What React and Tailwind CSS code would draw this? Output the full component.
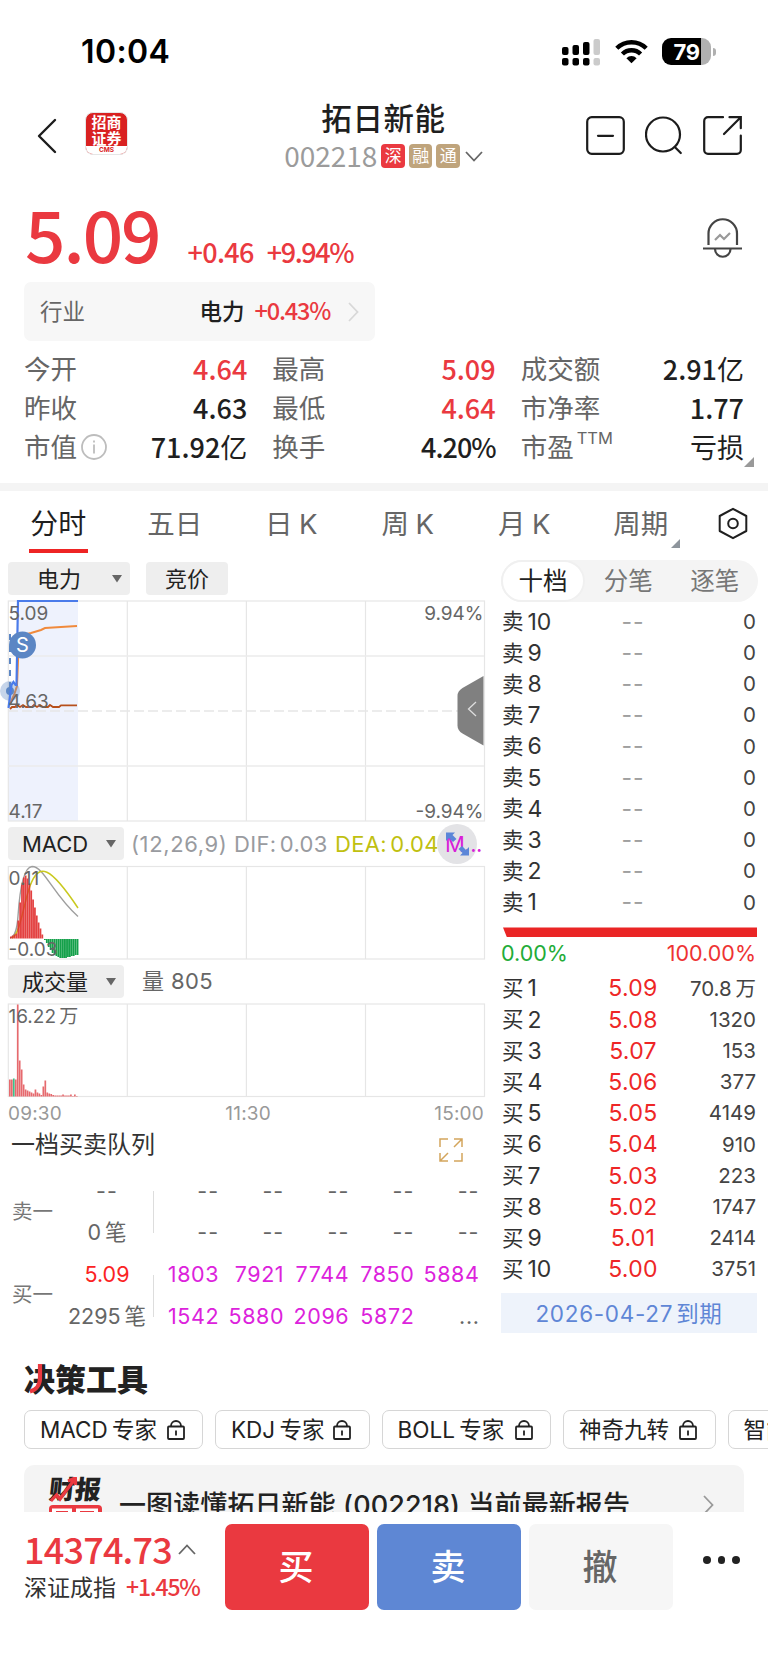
import { clsx } from "clsx"

const quotes = [
  [
    { label: "今开", value: "4.64", up: true },
    { label: "昨收", value: "4.63" },
    { label: "市值", value: "71.92", unit: "亿", info: true },
  ],
  [
    { label: "最高", value: "5.09", up: true },
    { label: "最低", value: "4.64", up: true },
    { label: "换手", value: "4.20%" },
  ],
  [
    { label: "成交额", value: "2.91", unit: "亿" },
    { label: "市净率", value: "1.77" },
    { label: "市盈", unit: "亏损", sup: "TTM" },
  ],
]

const tabs = ["分时", "五日", "日 K", "周 K", "月 K", "周期"]

const sells = [10, 9, 8, 7, 6, 5, 4, 3, 2, 1]

const buys = [
  ["5.09", "70.8 万"],
  ["5.08", "1320"],
  ["5.07", "153"],
  ["5.06", "377"],
  ["5.05", "4149"],
  ["5.04", "910"],
  ["5.03", "223"],
  ["5.02", "1747"],
  ["5.01", "2414"],
  ["5.00", "3751"],
]

const tools = [
  { name: "MACD 专家", width: "w-[179px]" },
  { name: "KDJ 专家", width: "w-[154.5px]" },
  { name: "BOLL 专家", width: "w-[169.5px]" },
  { name: "神奇九转", width: "w-[152.5px]" },
  { name: "智能盯盘", width: "w-[152.5px]" },
]

const macdUp = [2, 3, 4, 5, 18, 36, 54, 61, 63, 60, 55, 48, 39, 31, 23, 16, 10, 4]
const macdDown = [1, 4, 8, 11, 14, 16, 17, 18, 19, 19, 19, 19, 18, 18, 17, 17, 16, 16]
const volumes = [17, 17, 18, 17, 92, 36, 27, 12, 7, 6, 5, 4, 3, 7, 4, 3, 1.5, 10, 16, 4, 3, 2.5, 1.5, 1, 1, 1, 1, 2, 1, 1, 1, 2, 0.5, 2, 0.5]

function StatusBar() {
  return (
    <div className="flex h-[103px] shrink-0 items-center justify-between pr-[52px] pl-[81px] text-black">
      <span className="text-[32px] leading-none font-semibold tracking-[0.4px]">10:04</span>
      <div className="flex items-center">
        <svg width="39" height="28" viewBox="0 0 39 28">
          <rect x="0" y="9" width="6.5" height="8" rx="2" />
          <rect x="10.5" y="7" width="6.5" height="10" rx="2" />
          <rect x="21" y="4" width="6.5" height="13" rx="2" />
          <rect x="31.5" y="1" width="6.5" height="16" rx="2" fill="#cbcbcb" />
          <rect x="0" y="20" width="6.5" height="7.5" rx="2" />
          <rect x="10.5" y="20" width="6.5" height="7.5" rx="2" />
          <rect x="21" y="20" width="6.5" height="7.5" rx="2" />
          <rect x="31.5" y="20" width="6.5" height="7.5" rx="2" fill="#cbcbcb" />
        </svg>
        <svg className="ml-3.5" width="33" height="25" viewBox="0 0 33 25" fill="none" stroke="#000" strokeWidth="4.4">
          <path d="M1.8 9.3a20.8 20.8 0 0 1 29.4 0" />
          <path d="M7.4 15a12.8 12.8 0 0 1 18.2 0" />
          <path d="M11.4 19.2a7.2 7.2 0 0 1 10.2 0l-5.1 5.1z" fill="#000" stroke="none" />
        </svg>
        <div className="ml-3.5 flex h-[27px] w-[49px] items-center justify-center overflow-hidden rounded-[9px] bg-[linear-gradient(to_right,#000_79%,#b0b0b0_79%)] text-[22px] leading-none font-bold tracking-[-0.5px] text-white">
          79
        </div>
        <span className="ml-[2px] h-2 w-[3px] rounded-r-full bg-[#b0b0b0]" />
      </div>
    </div>
  )
}

function Tag({ children, className }) {
  return (
    <span className={clsx("ml-1 flex size-[23.5px] items-center justify-center rounded-[4px] text-[17px] leading-none text-white", className)}>
      {children}
    </span>
  )
}

function Header() {
  return (
    <header className="flex h-[65px] shrink-0 items-center justify-between pr-[26px] pl-[37px]">
      <div className="flex w-[168px] items-center">
        <svg width="20" height="36" viewBox="0 0 20 36" fill="none" stroke="#1c1c1c" strokeWidth="2.4" strokeLinecap="round" strokeLinejoin="round">
          <path d="M18 2 2 18l16 16" />
        </svg>
        <div className="mb-1 ml-[28px] flex h-[43px] w-[43px] flex-col overflow-hidden rounded-[8px] border border-[#e6e6e6] bg-[#d92121] text-center font-bold">
          <span className="mt-[2px] text-[15px] leading-[15.5px] text-white">招商</span>
          <span className="text-[15px] leading-[15.5px] text-white">证券</span>
          <span className="mt-auto h-2 bg-white text-[6.5px] leading-[8px] text-[#d92121]">CMS</span>
        </div>
      </div>
      <div className="flex flex-col items-center">
        <h1 className="text-[30.5px] leading-[31px] font-medium tracking-[0.6px] text-[#1f1f1f]">拓日新能</h1>
        <div className="mt-[10px] flex h-6 items-center">
          <span className="pb-[2px] font-['Noto_Sans_CJK_SC',sans-serif] text-[28px] leading-none text-[#9b9b9b]">002218</span>
          <Tag className="bg-[#ea3940]">深</Tag>
          <Tag className="bg-[#bfa47c]">融</Tag>
          <Tag className="bg-[#bfa47c]">通</Tag>
          <svg className="ml-[5px]" width="18" height="11" viewBox="0 0 18 11" fill="none" stroke="#666" strokeWidth="1.8">
            <path d="m1 1 8 8.5L17 1" />
          </svg>
        </div>
      </div>
      <div className="flex w-[180px] items-center justify-end gap-5">
        <svg width="39" height="39" viewBox="0 0 39 39" fill="none" stroke="#1c1c1c" strokeWidth="2.2" strokeLinecap="round">
          <rect x="1.2" y="1.2" width="36.6" height="36.6" rx="4.5" />
          <path d="M12 19.8h15" />
        </svg>
        <svg width="38" height="39" viewBox="0 0 38 39" fill="none" stroke="#1c1c1c" strokeWidth="2.2" strokeLinecap="round">
          <circle cx="18" cy="18.5" r="17" />
          <path d="m29.8 31 6 6" />
        </svg>
        <svg width="39" height="39" viewBox="0 0 39 39" fill="none" stroke="#1c1c1c" strokeWidth="2.2" strokeLinecap="round">
          <path d="M20 1.2H5A3.8 3.8 0 0 0 1.2 5v29A3.8 3.8 0 0 0 5 37.800h29a3.8 3.8 0 0 0 3.800-3.800V19.500" />
          <path d="M26.500 1.200h11.300v11M37 2 21 18" />
        </svg>
      </div>
    </header>
  )
}

function Price() {
  return (
    <div className="flex h-[114px] shrink-0 items-start justify-between pr-[26px] pl-[25px] font-['Noto_Sans_CJK_SC',sans-serif] font-medium text-[#ea3940]">
      <div className="flex items-baseline pt-[38px]">
        <span className="text-[71px] leading-[52px] tracking-[-2px]">5.09</span>
        <span className="ml-[28px] text-[27px] leading-none tracking-[-0.7px]">+0.46</span>
        <span className="ml-[13px] text-[27px] leading-none tracking-[-1.4px]">+9.94%</span>
      </div>
      <svg className="mt-[50px]" width="39" height="41" viewBox="0 0 39 41" fill="none" stroke="#444" strokeWidth="2.2">
        <path d="M5.500 27V15.500a14 14 0 0 1 28.500 0V27M0 30.500h39" />
        <path d="M12 31a7.700 7.700 0 0 0 15.500 0" />
        <path d="m12 22 5-5 4 4 6-6" stroke="#999" />
      </svg>
    </div>
  )
}

function Quotes() {
  return (
    <section className="shrink-0">
      <div className="ml-6 flex h-[59px] w-[351px] items-center rounded-[7px] bg-[#f7f7f7] pr-4 pl-4">
        <span className="text-[22.5px]  text-[#666]">行业</span>
        <span className="ml-auto text-[22.500px] font-medium text-[#1f1f1f]">电力</span>
        <span className="ml-2.5 pb-[2px] font-['Noto_Sans_CJK_SC',sans-serif] text-[23.5px] leading-none font-medium tracking-[-1.2px] text-[#ea3940]">+0.43%</span>
        <svg className="ml-[18px]" width="11" height="20" viewBox="0 0 11 20" fill="none" stroke="#d8d8d8" strokeWidth="1.8">
          <path d="m1 1 8.500 9L1 19" />
        </svg>
      </div>
      <div className="relative mt-[8.5px] grid grid-cols-3 gap-x-[25px] px-6">
        {quotes.map((column, i) => (
          <dl key={i}>
            {column.map((item) => (
              <div key={item.label} className="flex h-[39px] items-center">
                <dt className="flex items-center text-[26.5px] leading-none text-[#666]">
                  {item.label}
                  {item.sup && <sup className="top-0 ml-[3px] pb-[17px] text-[16.5px] leading-none">{item.sup}</sup>}
                  {item.info && (
                    <svg className="ml-[4px]" width="26" height="26" viewBox="0 0 26 26" fill="none" stroke="#bdbdbd" strokeWidth="1.8">
                      <circle cx="13" cy="13" r="12" />
                      <path d="M13 10.500v9M13 6.500v2" />
                    </svg>
                  )}
                </dt>
                <dd
                  className={clsx(
                    "ml-auto pb-[2px] font-['Noto_Sans_CJK_SC',sans-serif] text-[27px] leading-none font-medium",
                    item.up ? "text-[#ea3940]" : "text-[#1f1f1f]",
                    item.value === "4.20%" && "tracking-[-1px]"
                  )}
                >
                  {item.value}
                  {item.unit && <span className="font-normal">{item.unit}</span>}
                </dd>
              </div>
            ))}
          </dl>
        ))}
        <svg className="absolute right-[14px] bottom-0" width="10" height="10">
          <path d="M10 0v10H0z" fill="#999" />
        </svg>
      </div>
      <div className="mt-[16.5px] h-2 bg-[#f4f4f4]" />
    </section>
  )
}

function Tabs() {
  return (
    <nav className="flex h-[62px] shrink-0 text-[27.5px] text-[#666]">
      <div className="grid w-[699px] grid-cols-6">
        {tabs.map((tab, i) => (
          <div key={tab} className="flex justify-center">
            <span
              className={clsx(
                "relative h-[62px] leading-[66px] whitespace-nowrap",
                i === 0 && "w-[59px] border-b-4 border-[#ee2424] text-center text-[28px] text-[#1f1f1f]",
                i > 1 && i < 5 && "[word-spacing:-1px]"
              )}
            >
              {tab}
              {tab === "周期" && (
                <svg className="absolute -right-3 bottom-[5px]" width="9" height="9">
                  <path d="M9 0v9H0z" fill="#8e959c" />
                </svg>
              )}
            </span>
          </div>
        ))}
      </div>
      <svg className="mt-4 ml-[19px]" width="30" height="33" viewBox="0 0 30 33" fill="none" stroke="#1f1f1f" strokeWidth="2" strokeLinejoin="round">
        <path d="M15 1.800 28.300 9v15L15 31.200 1.700 24V9z" />
        <circle cx="15" cy="16.500" r="4.800" />
      </svg>
    </nav>
  )
}

function Chip({ children, className, caret = true }) {
  return (
    <span className={clsx("flex h-[33px] items-center rounded-[4px] bg-[#eee] text-[22px] leading-none text-[#222]", className)}>
      {children}
      {caret && (
        <svg className="ml-auto" width="10" height="8">
          <path d="M0 0h10L5 7.500z" fill="#666" />
        </svg>
      )}
    </span>
  )
}

function Columns({ top, bottom }) {
  return (
    <g stroke="#e6e6e6" strokeWidth="1.2" fill="none">
      <rect x="8.300" y={top} width="476.200" height={bottom - top} />
      <path d={`M127.300 ${top}V${bottom}M246.400 ${top}V${bottom}M365.500 ${top}V${bottom}`} />
    </g>
  )
}

function TimeChart() {
  return (
    <svg className="mt-[5px] block" width="493" height="222" viewBox="0 600 493 222">
      <rect x="8" y="601" width="70" height="220" fill="#eef2fd" />
      <path d="M9 601h8v84l-8 20z" fill="#fff" />
      <Columns top={601} bottom={821} />
      <path d="M8 656h476M8 766h476" stroke="#ececec" strokeWidth="1.500" />
      <path d="M8 711h476" stroke="#e6e6e6" strokeWidth="1.500" strokeDasharray="10 4" />
      <path d="M10 634v59" stroke="#5b86c4" strokeWidth="2" strokeDasharray="6 6" />
      <path d="M9 706l5-11 3-9 2-50 12-3 10-3 4-2 32-2" fill="none" stroke="#f08a3c" strokeWidth="2" />
      <path d="M10 709l2-2h3l2-2 3 2 3-2 3 2h6l2-2 3 2 3-2 3 2h5l2-2 3 2h6l2-1.700h16" fill="none" stroke="#b7501c" strokeWidth="1.800" />
      <circle cx="10" cy="691" r="10" fill="#5b86c4" fillOpacity=".35" />
      <circle cx="10" cy="691" r="4" fill="#5b86c4" />
      <path d="M8.500 708l3-23 2-3 2 3h1l1.500-84H78" fill="none" stroke="#4a7bea" strokeWidth="2.200" />
      <g fontSize="19" fill="#666">
        <text x="8.500" y="619.500">5.09</text>
        <text x="8.500" y="707.500">4.63</text>
        <text x="8.500" y="817.500">4.17</text>
        <text x="483.500" y="619.500" textAnchor="end">9.94%</text>
        <text x="483.500" y="817.500" textAnchor="end">-9.94%</text>
      </g>
      <circle cx="22.500" cy="645" r="13.500" fill="#5b86c4" />
      <text x="22.500" y="652" textAnchor="middle" fontSize="20" fill="#fff">S</text>
      <path d="M483.500 676v69.500l-21-12q-5-3-5-8v-29.500q0-5 5-8z" fill="#808080" />
      <path d="m476 702-7.500 7 7.500 7" fill="none" stroke="#ddd" strokeWidth="1.300" />
    </svg>
  )
}

function MacdChart() {
  return (
    <svg className="mt-[5px] block" width="493" height="95" viewBox="0 865 493 95">
      <Columns top={866.5} bottom={959} />
      <path d="M10 938c5-1 7-8 8-22 2-30 6-49 14-49.500 12 0 21 28 46 50" fill="none" stroke="#9e9e9e" strokeWidth="1.400" />
      <path d="M12 938c8-3 12-36 18-52 9-24 20-20 48 22" fill="none" stroke="#c9c91e" strokeWidth="1.500" />
      {macdUp.map((h, i) => (
        <rect key={i} x={10 + i * 1.85} y={938.5 - h} width="1.750" height={h} fill="#e02c2c" fillOpacity=".9" />
      ))}
      {macdDown.map((h, i) => (
        <rect key={i} x={44 + i * 1.92} y="939" width="1.800" height={h} fill="#14a04a" />
      ))}
      <g fontSize="19" fill="#666">
        <text x="8.500" y="885">0.11</text>
        <text x="8.500" y="955.500">-0.03</text>
      </g>
    </svg>
  )
}

function VolumeChart() {
  return (
    <svg className="mt-[5px] block" width="493" height="95" viewBox="0 1003 493 95">
      <Columns top={1004} bottom={1096.5} />
      {volumes.map((h, i) => (
        <rect key={i} x={9 + i * 1.97} y={1096.5 - h} width="1.700" height={h} fill={i === 2 ? "#3cc08a" : "#e66a6e"} />
      ))}
      <text x="8.500" y="1022.500" fontSize="19" fill="#666" wordSpacing="-2">16.22 万</text>
    </svg>
  )
}

function QueueBlock({ label, price, count, cells, filled }) {
  return (
    <div className="flex h-[83.5px] items-center pl-3">
      <span className="w-[49px] text-[20.5px] text-[#777]">{label}</span>
      <div className="w-[92px] text-center text-[21.5px] leading-[41.75px] whitespace-nowrap text-[#666]">
        <div className={clsx(filled ? "text-[#fb2323]" : "tracking-[1px]")}>{price}</div>
        <div className="[word-spacing:-2px]">{count}</div>
      </div>
      <div className="h-[42px] w-px bg-[#ddd]" />
      <div
        className={clsx(
          "grid w-[325.5px] grid-cols-5 text-right text-[21.5px] leading-[41.75px] whitespace-nowrap",
          filled ? "tracking-[0.6px] text-[#dc22dc]" : "tracking-[1px] text-[#666]"
        )}
      >
        {cells.map((cell, i) => (
          <span key={i} className={clsx(cell === "..." && "text-[#666]")}>
            {cell}
          </span>
        ))}
      </div>
    </div>
  )
}

function Charts() {
  return (
    <div className="w-[493px] shrink-0">
      <div className="mt-[9px] flex gap-4 pl-2">
        <Chip className="w-[122px] pr-2 pl-[29px]">电力</Chip>
        <Chip className="w-[82px] justify-center" caret={false}>竞价</Chip>
      </div>
      <TimeChart />
      <div className="mt-[5px] flex h-[33px] items-center pl-2 text-[22px] whitespace-nowrap">
        <Chip className="w-[116px] shrink-0 pr-2 pl-3.5">MACD</Chip>
        <span className="ml-[7px] w-[103px] shrink-0 pt-px tracking-[0.6px] text-[#999ba0]">(12,26,9)</span>
        <span className="w-[101px] shrink-0 pt-px tracking-[0.3px] text-[#999ba0] [word-spacing:-3px]">DIF: 0.03</span>
        <span className="w-[110px] shrink-0 pt-px tracking-[0.3px] text-[#c0c010] [word-spacing:-3px]">DEA: 0.04</span>
        <span className="relative flex w-[40px] items-center text-[#d81fd8]">
          <span className="absolute top-1/2 -left-2 size-10 -translate-y-1/2 rounded-full bg-[#e3e3e6]" />
          <span className="relative pt-px tracking-[-0.5px]">M...</span>
          <svg className="absolute top-1/2 left-0 -translate-y-1/2" width="25" height="25" viewBox="0 0 25 25" fill="#5b86d8">
            <path d="M1 1h9L7.500 3.500l4 4-3.500 3-4-4L1 9.500zM24 24h-9l2.500-2.500-4-4 3.500-3 4 4 3-3z" />
          </svg>
        </span>
      </div>
      <MacdChart />
      <div className="mt-[5px] flex h-[33px] items-center pl-2 text-[22px] text-[#666]">
        <Chip className="w-[116px] pr-2 pl-3.5">成交量</Chip>
        <span className="ml-[18px] tracking-[0.4px]">量 805</span>
      </div>
      <VolumeChart />
      <div className="flex h-[30px] items-center justify-between pt-[2px] pr-[9px] pl-[8px] text-[19px] tracking-[0.2px] text-[#999]">
        <span>09:30</span>
        <span>11:30</span>
        <span>15:00</span>
      </div>
      <div className="mt-px flex h-[30px] items-center justify-between pr-[30px] pl-[11px]">
        <h2 className="pt-[2px] text-[24px] leading-none text-[#333]">一档买卖队列</h2>
        <svg className="mt-3" width="24" height="24" viewBox="0 0 24 24" fill="none" stroke="#d3a55c" strokeWidth="1.500">
          <path d="M1 9V1h8M15 1h8v8M23 15v8h-8M9 23H1v-8M23 1l-8 8M1 23l8-8" />
        </svg>
      </div>
      <div className="mt-[11.5px]">
        <QueueBlock label="卖一" price="--" count="0 笔" cells={Array(10).fill("--")} />
        <QueueBlock
          label="买一"
          price="5.09"
          count="2295 笔"
          filled
          cells={["1803", "7921", "7744", "7850", "5884", "1542", "5880", "2096", "5872", "..."]}
        />
      </div>
    </div>
  )
}

function BookRow({ side, level, price, amount }) {
  return (
    <div className="flex h-[31.2px] items-center text-[23px] leading-none whitespace-nowrap text-[#333]">
      <span className="flex w-[89px] items-center gap-1">
        <span className="text-[21.5px]">{side}</span>
        <span>{level}</span>
      </span>
      <span className={clsx("w-[84px] text-center", price === "--" ? "tracking-[1px] text-[#a0a0a0]" : "tracking-[0.3px] text-[#ee2626]")}>
        {price}
      </span>
      <span className="flex-1 text-right text-[20.5px] text-[#444] [word-spacing:-2px]">{amount}</span>
    </div>
  )
}

function OrderBook() {
  return (
    <div className="mr-2.5 ml-2 flex-1">
      <div className="mt-[7px] flex h-[42px] items-center rounded-full bg-[#f4f4f4] text-[24.5px] text-[#777]">
        <span className="flex h-[42px] w-[84px] items-center justify-center rounded-full border-2 border-[#f0f0f0] bg-white text-[#222]">十档</span>
        <span className="flex-1 text-center">分笔</span>
        <span className="flex-1 text-center">逐笔</span>
      </div>
      <div className="mt-[4.5px] pr-[2px] pl-[1px]">
        {sells.map((level) => (
          <BookRow key={level} side="卖" level={level} price="--" amount="0" />
        ))}
      </div>
      <div className="mt-[9px] mr-px ml-[2px] h-2.5 bg-[#ea2525] [clip-path:polygon(0_0,100%_0,100%_100%,4px_100%)]" />
      <div className="flex h-8 items-center justify-between pr-[2px] text-[21.5px]">
        <span className="text-[#22ac38]">0.00%</span>
        <span className="text-[#ee3333]">100.00%</span>
      </div>
      <div className="mt-[4px] pr-[2px] pl-[1px]">
        {buys.map(([price, amount], i) => (
          <BookRow key={price} side="买" level={i + 1} price={price} amount={amount} />
        ))}
      </div>
      <div className="mt-[8px] mr-px h-[40px] bg-[#eef3fb] text-center text-[22.5px] leading-[41px] tracking-[0.7px] text-[#5f86d6] [word-spacing:-4px]">
        2026-04-27 到期
      </div>
    </div>
  )
}

function Tools() {
  return (
    <section className="h-[159px] shrink-0 overflow-hidden">
      <h2 className="relative flex h-[52px] items-center pl-6 text-[31px] leading-none font-black text-[#222]">
        决策工具
        <svg className="absolute top-[11px] left-[28px]" width="16" height="30" viewBox="0 0 16 30" fill="none" stroke="#ea3940" strokeWidth="4.200">
          <path d="M12 0v14c0 7-4 12-10 13.500" />
        </svg>
      </h2>
      <div className="mt-[5px] flex gap-3 pl-6">
        {tools.map((tool) => (
          <div
            key={tool.name}
            className={clsx(
              "flex h-[39px] shrink-0 items-center justify-between rounded-[7px] border border-[#d6d6d6] pr-[17.5px] pl-[15px] text-[22.5px] whitespace-nowrap text-[#222] [word-spacing:-2px]",
              tool.width
            )}
          >
            {tool.name}
            <svg width="18" height="20" viewBox="0 0 18 20" fill="none" stroke="#222" strokeWidth="1.800">
              <rect x="1" y="6.500" width="16" height="12.500" rx="1" />
              <path d="M4 6a5 5 0 0 1 10 0M9 10.500v5" />
            </svg>
          </div>
        ))}
      </div>
      <div className="mx-6 mt-4 flex h-[80px] items-center rounded-t-[10px] bg-[#f4f4f4] pl-[25px]">
        <div className="w-[54px] self-start pt-[12px]">
          <div className="relative -skew-x-6 text-[26px] leading-[26px] font-black whitespace-nowrap text-[#222]">
            财报
            <svg className="absolute top-0 left-0" width="30" height="26" viewBox="0 0 30 26" fill="none" stroke="#ea3940" strokeWidth="3.400">
              <path d="m3 24 5-6 4 4L24 3M18 4l7-3 1 7" />
            </svg>
          </div>
          <svg className="mt-[2px] block" width="54" height="24" viewBox="0 0 54 24">
            <rect width="53" height="24" rx="4" fill="#ea3940" />
            <path d="M3 3.500h20v17H3zM27 3.500h22v17H27z" fill="#fff" />
            <path d="M7 6h12v3H7zM31 6h14v3H31z" fill="#ea3940" />
          </svg>
        </div>
        <span className="ml-[16px] text-[27px] leading-none font-medium tracking-[0.1px] whitespace-nowrap text-[#222]">一图读懂拓日新能 (002218) 当前最新报告</span>
        <svg className="mr-[30px] ml-auto" width="11" height="20" viewBox="0 0 11 20" fill="none" stroke="#999" strokeWidth="1.800">
          <path d="m1 1 8.500 9L1 19" />
        </svg>
      </div>
    </section>
  )
}

function TradeButton({ children, className }) {
  return (
    <button className={clsx("h-[86px] w-36 rounded-[7px] pr-[2px] text-[35px] leading-none font-medium", className)}>{children}</button>
  )
}

function BottomBar() {
  return (
    <footer className="flex h-[151px] shrink-0 items-start bg-white pt-3 pl-6">
      <div className="w-[201px] font-['Noto_Sans_CJK_SC',sans-serif] text-[#ea3940]">
        <div className="flex h-[53px] items-center">
          <span className="pb-[5px] text-[36px] leading-none font-medium tracking-[-0.8px]">14374.73</span>
          <svg className="mb-[3px] ml-1.5" width="18" height="11" viewBox="0 0 18 11" fill="none" stroke="#666" strokeWidth="1.800">
            <path d="m1 10 8-8.500L17 10" />
          </svg>
        </div>
        <div className="flex h-[18px] items-center leading-none">
          <span className="text-[23px] text-[#333]">深证成指</span>
          <span className="ml-2.5 text-[23px] font-medium tracking-[-1.2px]">+1.45%</span>
        </div>
      </div>
      <div className="flex gap-2">
        <TradeButton className="bg-[#ea3940] text-white">买</TradeButton>
        <TradeButton className="bg-[#5e87d4] text-white">卖</TradeButton>
        <TradeButton className="bg-[#f6f6f6] text-[#666]">撤</TradeButton>
      </div>
      <div className="mt-8 ml-[30px] flex gap-[7px]">
        <span className="size-[7.5px] rounded-full bg-[#222]" />
        <span className="size-[7.5px] rounded-full bg-[#222]" />
        <span className="size-[7.5px] rounded-full bg-[#222]" />
      </div>
    </footer>
  )
}

function App() {
  return (
    <div className="flex h-[1663px] w-[768px] flex-col overflow-hidden bg-white font-['Inter','Noto_Sans_CJK_SC',sans-serif]">
      <StatusBar />
      <Header />
      <Price />
      <Quotes />
      <Tabs />
      <main className="flex h-[800px] shrink-0">
        <Charts />
        <OrderBook />
      </main>
      <Tools />
      <BottomBar />
    </div>
  )
}

export default App
